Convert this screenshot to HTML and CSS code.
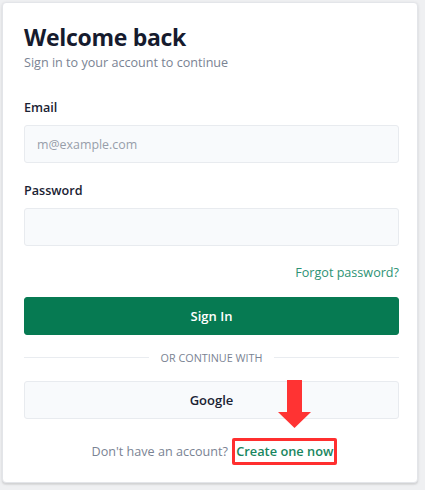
FILE: index.html
```html
<!DOCTYPE html>
<html lang="en">
<head>
<meta charset="utf-8">
<title>Sign in</title>
<link rel="stylesheet" href="styles.css">
</head>
<body>
<main class="card">
  <h1 class="title">Welcome back</h1>
  <p class="subtitle">Sign in to your account to continue</p>

  <div class="field">
    <label class="label" for="email">Email</label>
    <input class="input" id="email" type="email" placeholder="m@example.com">
  </div>

  <div class="field field-password">
    <label class="label" for="password">Password</label>
    <input class="input" id="password" type="password">
  </div>

  <div class="forgot-row"><a class="forgot" href="#">Forgot password?</a></div>

  <button class="btn btn-primary" type="button">Sign In</button>

  <div class="divider"><span class="divider-line"></span><span class="divider-text">OR CONTINUE WITH</span><span class="divider-line"></span></div>

  <button class="btn btn-secondary" type="button">Google</button>

  <p class="signup">Don't have an account? <a class="signup-link" href="#">Create one now</a></p>

  <svg class="arrow" width="34" height="50" viewBox="0 0 34 50" aria-hidden="true">
    <path d="M9 0 H24 V32 H33 L16.5 48 L0 32 H9 Z" fill="#ff3333"/>
  </svg>
</main>
</body>
</html>
```

FILE: styles.css
```css
* { box-sizing: border-box; }

html, body {
  margin: 0;
  padding: 0;
}

body {
  background: #eff0f2;
  font-family: "Open Sans", "Noto Sans", Arial, sans-serif;
  color: #0f172a;
  width: 425px;
  height: 490px;
  overflow: hidden;
}

.card {
  position: relative;
  margin: 2px 7px 0 2px;
  height: 481px;
  background: #ffffff;
  border: 1px solid #e3e5e9;
  border-radius: 4px;
  box-shadow: 0 1px 3px rgba(0, 0, 0, 0.12), 0 2px 1px rgba(0, 0, 0, 0.04);
  padding: 18px 18px 0 21px;
}

.title {
  margin: 0;
  font-size: 23px;
  line-height: 32px;
  font-weight: 700;
  letter-spacing: -0.3px;
  color: #161b2e;
}

.subtitle {
  margin: 0;
  font-size: 12.6px;
  line-height: 20px;
  color: #7a8393;
}

.field {
  margin-top: 25px;
  display: flex;
  flex-direction: column;
}

.field-password {
  margin-top: 18px;
}

.label {
  font-size: 12.6px;
  line-height: 20px;
  font-weight: 600;
  color: #1a2233;
  margin-bottom: 7px;
}

.input {
  height: 38px;
  width: 100%;
  border: 1px solid #e8ebef;
  border-radius: 3px;
  background: #f8fafc;
  padding: 0 12px;
  font-family: inherit;
  font-size: 12.4px;
  color: #111827;
  outline: none;
}

.input::placeholder {
  color: #979eaa;
}

.forgot-row {
  display: flex;
  justify-content: flex-end;
  margin-top: 17px;
  line-height: 20px;
}

.forgot {
  font-size: 12.6px;
  color: #2d9274;
  text-decoration: none;
}

.btn {
  display: block;
  width: 100%;
  height: 38px;
  border-radius: 3px;
  font-family: inherit;
  font-size: 13px;
  font-weight: 600;
  cursor: pointer;
}

.btn-primary {
  margin-top: 14px;
  background: #067a52;
  border: 1px solid #067a52;
  color: #ffffff;
}

.divider {
  display: flex;
  align-items: center;
  gap: 12px;
  margin-top: 12px;
  height: 20px;
}

.divider-line {
  flex: 1;
  height: 1px;
  background: #e9ecf0;
}

.divider-text {
  font-size: 10.8px;
  color: #7a8393;
}

.btn-secondary {
  margin-top: 14px;
  background: #f8fafc;
  border: 1px solid #e8ebef;
  color: #1a2233;
}

.signup {
  margin: 19px 0 0;
  padding-left: 6px;
  text-align: center;
  font-size: 12.6px;
  line-height: 20px;
  color: #7a8393;
}

.signup-link {
  display: inline-block;
  font-weight: 600;
  font-size: 12.8px;
  color: #18865e;
  text-decoration: none;
  padding: 0 1px;
  border: 3px solid #ff2f2f;
  border-radius: 2px;
  line-height: 21px;
  margin-left: 1px;
}

.arrow {
  position: absolute;
  left: 275px;
  top: 377px;
}
```
